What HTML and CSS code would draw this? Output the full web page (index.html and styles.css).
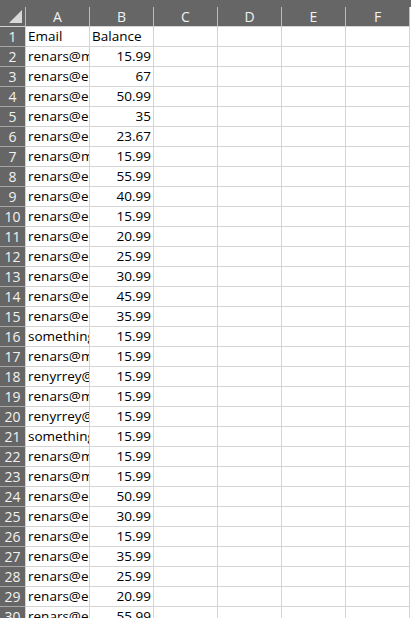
FILE: index.html
```html
<!DOCTYPE html>
<html lang="en">
<head>
  <meta charset="UTF-8" />
  <title>Sheet1</title>
  <link rel="stylesheet" href="styles.css">
</head>
<body>
<div class="topstrip"></div>
<table class="sheet">
  <colgroup>
    <col class="c-row">
    <col class="c-col"><col class="c-col"><col class="c-col">
    <col class="c-col"><col class="c-col"><col class="c-col">
  </colgroup>
  <thead>
    <tr>
      <th class="corner"><span class="tri"></span></th>
      <th>A</th><th>B</th><th>C</th><th>D</th><th>E</th><th>F</th>
    </tr>
  </thead>
  <tbody id="rows">
    <tr><th>1</th><td>Email</td><td>Balance</td><td></td><td></td><td></td><td></td></tr>
  </tbody>
</table>

<script>
// column A is cut by column B, so only the visible part is kept
const data = [
  ["renars@m", "15.99"],
  ["renars@e", "67"],
  ["renars@e", "50.99"],
  ["renars@e", "35"],
  ["renars@e", "23.67"],
  ["renars@m", "15.99"],
  ["renars@e", "55.99"],
  ["renars@e", "40.99"],
  ["renars@e", "15.99"],
  ["renars@e", "20.99"],
  ["renars@e", "25.99"],
  ["renars@e", "30.99"],
  ["renars@e", "45.99"],
  ["renars@e", "35.99"],
  ["something", "15.99"],
  ["renars@m", "15.99"],
  ["renyrrey@", "15.99"],
  ["renars@m", "15.99"],
  ["renyrrey@", "15.99"],
  ["something", "15.99"],
  ["renars@m", "15.99"],
  ["renars@m", "15.99"],
  ["renars@e", "50.99"],
  ["renars@e", "30.99"],
  ["renars@e", "15.99"],
  ["renars@e", "35.99"],
  ["renars@e", "25.99"],
  ["renars@e", "20.99"],
  ["renars@e", "55.99"]
];

const body = document.getElementById("rows");
data.forEach((row, i) => {
  const tr = document.createElement("tr");
  tr.innerHTML =
    "<th>" + (i + 2) + "</th>" +
    "<td>" + row[0] + "</td>" +
    "<td class=\"num\">" + row[1] + "</td>" +
    "<td></td><td></td><td></td><td></td>";
  body.appendChild(tr);
});
</script>
</body>
</html>
```

FILE: styles.css
```css
body {
  margin: 0;
  background: #fff;
  font-family: "Open Sans", "Noto Sans", sans-serif;
  font-size: 13.5px;
  overflow: hidden;
}

.topstrip {
  height: 7px;
  background: #666;
}

.sheet {
  border-collapse: separate;
  border-spacing: 0;
  table-layout: fixed;
  width: 410px;
}

.c-row { width: 26px; }
.c-col { width: 64px; }

.sheet th,
.sheet td {
  box-sizing: border-box;
  height: 20px;
  padding: 0 2px;
  border-right: 1px solid #d4d4d4;
  border-bottom: 1px solid #d4d4d4;
  white-space: nowrap;
  overflow: hidden;
  text-overflow: clip;
  line-height: 19px;
  color: #000;
}

.sheet thead th {
  background: #666;
  color: #f2f2f2;
  font-weight: normal;
  font-size: 14px;
  text-align: center;
  border-right-color: #bdbdbd;
  border-bottom-color: #d4d4d4;
}

.sheet tbody th {
  background: #666;
  color: #f2f2f2;
  font-weight: normal;
  font-size: 14px;
  text-align: center;
  padding: 0;
  border-right-color: #d4d4d4;
  border-bottom-color: #a6a6a6;
}

.sheet td {
  text-align: left;
}

.sheet td.num {
  text-align: right;
}

.corner {
  position: relative;
}

.tri {
  position: absolute;
  right: 3px;
  bottom: 3px;
  width: 0;
  height: 0;
  border-left: 13px solid transparent;
  border-bottom: 13px solid #d9d9d9;
}
```
